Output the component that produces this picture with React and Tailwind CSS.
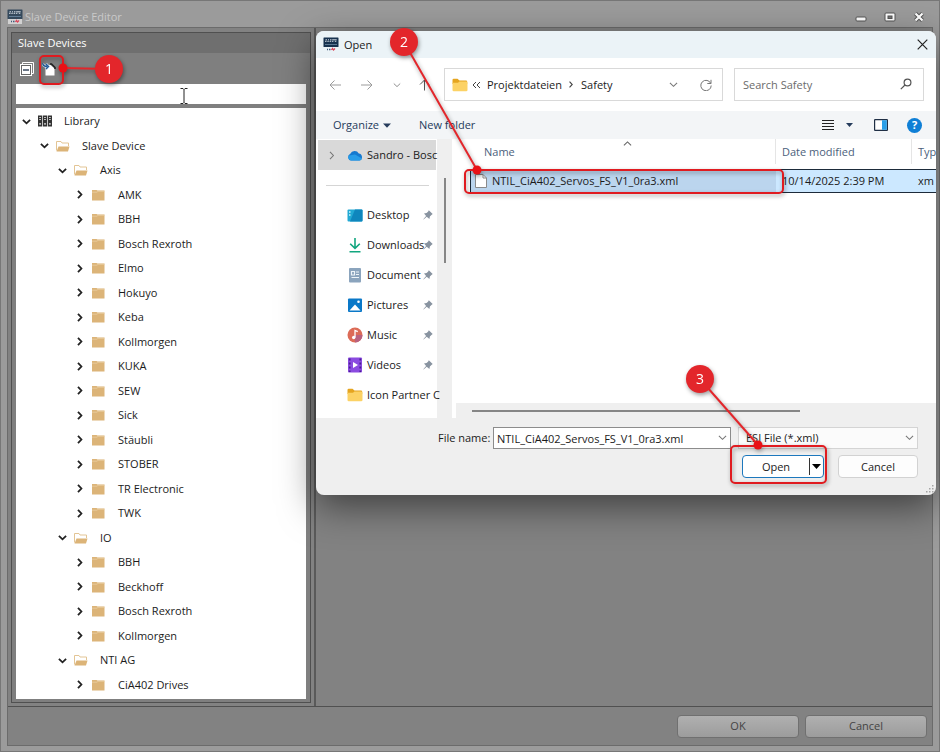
import React, { useState } from 'react';

const TREE = [
  { name: 'Library', level: 0, kind: 'library' },
  { name: 'Slave Device', level: 1, kind: 'open' },
  { name: 'Axis', level: 2, kind: 'open' },
  { name: 'AMK', level: 3, kind: 'folder' },
  { name: 'BBH', level: 3, kind: 'folder' },
  { name: 'Bosch Rexroth', level: 3, kind: 'folder' },
  { name: 'Elmo', level: 3, kind: 'folder' },
  { name: 'Hokuyo', level: 3, kind: 'folder' },
  { name: 'Keba', level: 3, kind: 'folder' },
  { name: 'Kollmorgen', level: 3, kind: 'folder' },
  { name: 'KUKA', level: 3, kind: 'folder' },
  { name: 'SEW', level: 3, kind: 'folder' },
  { name: 'Sick', level: 3, kind: 'folder' },
  { name: 'Stäubli', level: 3, kind: 'folder' },
  { name: 'STOBER', level: 3, kind: 'folder' },
  { name: 'TR Electronic', level: 3, kind: 'folder' },
  { name: 'TWK', level: 3, kind: 'folder' },
  { name: 'IO', level: 2, kind: 'open' },
  { name: 'BBH', level: 3, kind: 'folder' },
  { name: 'Beckhoff', level: 3, kind: 'folder' },
  { name: 'Bosch Rexroth', level: 3, kind: 'folder' },
  { name: 'Kollmorgen', level: 3, kind: 'folder' },
  { name: 'NTI AG', level: 2, kind: 'open' },
  { name: 'CiA402 Drives', level: 3, kind: 'folder' },
];

const INDENT = ['pl-1.5', 'pl-6', 'pl-[42px]', 'pl-[60px]'];

const PLACES = [
  { name: 'Desktop', icon: 'desktop', pinned: true },
  { name: 'Downloads', icon: 'downloads', pinned: true },
  { name: 'Document', icon: 'documents', pinned: true },
  { name: 'Pictures', icon: 'pictures', pinned: true },
  { name: 'Music', icon: 'music', pinned: true },
  { name: 'Videos', icon: 'videos', pinned: true },
  { name: 'Icon Partner C', icon: 'folder', pinned: false },
];

const AppLogo = ({ dim }) => (
  <svg width="16" height="16" viewBox="0 0 16 16" className="shrink-0" aria-hidden="true">
    {dim && <rect x="1" y="8" width="14" height="7" fill="#d2d2d2" />}
    <rect x="0.5" y="0.5" width="15" height="9.5" rx="0.5" fill={dim ? '#34495c' : '#17324f'} />
    <path d="M2 4.300h1.500M4.300 4.300h1.500M6.600 4.300h1.500M8.900 4.300h1.500M11.800 4.300h1.500M2.500 2.800h1.500M5 2.800h1M7 2.800h1.500M9.200 2.800h4.500" stroke="#e6edf3" strokeWidth="0.900" />
    <path d="M2 7.500h12" stroke="#6f8ba5" strokeWidth="0.800" />
    <path d="M4 12.500h1M6 12.500h1.500" stroke="#3f5a7a" strokeWidth="1.600" />
    <path d="M8.500 13l1-1.500 1 1.500 1.500-1.500" stroke="#d8455a" strokeWidth="1.300" fill="none" />
  </svg>
);

const Chevron = ({ dir = 'down', size = 10, color = '#222', weight = 1.2 }) => {
  const d = {
    down: 'M1 3.200 L5 7 L9 3.200',
    up: 'M1 7 L5 3.200 L9 7',
    right: 'M2.200 1 L6 5 L2.200 9',
  }[dir];
  return (
    <svg width={size} height={size} viewBox="0 0 10 10" fill="none" stroke={color} strokeWidth={weight} className="shrink-0" aria-hidden="true">
      <path d={d} />
    </svg>
  );
};

const TreeIcon = ({ kind }) => {
  if (kind === 'library') {
    return (
      <svg width="14" height="14" viewBox="0 0 14 14" className="shrink-0" aria-hidden="true">
        <rect x="0" y="1.500" width="4.200" height="11" fill="#333" />
        <rect x="4.900" y="1.500" width="4.200" height="11" fill="#333" />
        <rect x="9.800" y="1.500" width="4.200" height="11" fill="#333" />
        <path d="M1.200 3.500h1.800M1.200 5.500h1.800M6.100 3.500h1.800M6.100 5.500h1.800M11 3.500h1.800M11 5.500h1.800" stroke="#ddd" strokeWidth="0.900" />
        <path d="M1.300 9h1.600v1.700H1.300zM6.200 9h1.600v1.700H6.200zM11.100 9h1.600v1.700h-1.600z" fill="#ccc" />
      </svg>
    );
  }
  if (kind === 'open') {
    return (
      <svg width="14" height="12" viewBox="0 0 14 12" className="shrink-0" aria-hidden="true">
        <path d="M0.500 10.500V1.500H5L6 3H12.500V6" fill="none" stroke="#e3c595" />
        <path d="M2.500 6.500H13.500L12 11.500H0.500z" fill="#dcb478" />
      </svg>
    );
  }
  return (
    <svg width="14" height="12" viewBox="0 0 14 12" className="shrink-0" aria-hidden="true">
      <path d="M0 1h4.500l1 0.500H12.500V11.500H0z" fill="#dcb478" />
      <path d="M0 3.200h5l1-0.900h6.500" stroke="#ecd3a8" strokeWidth="0.700" fill="none" />
    </svg>
  );
};

const YellowFolder = () => (
  <svg width="16" height="14" viewBox="0 0 16 14" className="shrink-0" aria-hidden="true">
    <path d="M0.500 2Q0.500 0.800 1.700 0.800H5.500L7.500 2.600H14Q15.200 2.600 15.200 3.800V6H0.500z" fill="#e5a520" />
    <path d="M0.500 4.800H6L7.500 3.500H14Q15.500 3.500 15.500 4.800V12Q15.500 13.200 14.200 13.200H1.700Q0.500 13.200 0.500 12z" fill="#fcd265" />
  </svg>
);

const PlaceIcon = ({ icon }) => {
  if (icon === 'folder') return <YellowFolder />;
  return (
    <svg width="16" height="16" viewBox="0 0 16 16" className="shrink-0" aria-hidden="true">
      {icon === 'desktop' && (
        <>
          <rect x="0.500" y="2.500" width="15" height="12" rx="1" fill="#22a9d4" />
          <path d="M8 2.500h6.500q1 0 1 1v10q0 1-1 1H3z" fill="#0f86bd" />
          <path d="M2 5h1.500M2 8h1.500" stroke="#c9f2fb" strokeWidth="1.500" />
        </>
      )}
      {icon === 'downloads' && (
        <path d="M8 1V11M3.200 6.700L8 11.400L12.800 6.700M2.500 14.700H13.500" stroke="#12a67f" strokeWidth="1.600" fill="none" />
      )}
      {icon === 'documents' && (
        <>
          <rect x="2" y="1" width="12" height="14.500" rx="1" fill="#8ba4bd" />
          <path d="M4.500 4.500h3v3.500h-3zM9 5h3M9 7.500h3M4.500 10.500h7.500" stroke="#eef4f9" strokeWidth="1.200" fill="none" />
        </>
      )}
      {icon === 'pictures' && (
        <>
          <rect x="1" y="1.500" width="14" height="13.500" rx="1" fill="#0a78c8" />
          <path d="M2.500 13.500L8 7.500L13.500 13.500z" fill="#fff" />
          <circle cx="11.500" cy="4.800" r="1.300" fill="#fff" />
        </>
      )}
      {icon === 'music' && (
        <>
          <circle cx="8" cy="8" r="7.500" fill="#dc6b57" />
          <path d="M8 15.500A7.500 7.500 0 0 0 15.500 8L8 8z" fill="#b9627f" />
          <circle cx="6.700" cy="10.500" r="1.700" fill="#fff" />
          <path d="M8 10.500V3.500l2.800 1.200" stroke="#fff" strokeWidth="1.300" fill="none" />
        </>
      )}
      {icon === 'videos' && (
        <>
          <rect x="1" y="0.500" width="14" height="15" rx="1" fill="#8b4be0" />
          <path d="M2.700 1.500V15M13.300 1.500V15" stroke="#4b1d94" strokeWidth="1.700" strokeDasharray="2 2" />
          <path d="M6 5L11 8L6 11z" fill="#fff" />
        </>
      )}
    </svg>
  );
};

const Pin = () => (
  <svg width="10" height="10" viewBox="0 0 10 10" className="shrink-0" aria-hidden="true">
    <path d="M5.800 0.300L9.700 4L8.700 4.700L6.900 6.600L6.400 9L3.700 6.700L0.600 9.500L0.300 9.200L3.100 6.100L1 3.600L3.600 3.100L5.200 1.400z" fill="#8893a0" />
  </svg>
);

// Numbered badge, leader line and frame around the control it points at
const Callout = ({ n, badge, dot, frame, className }) => (
  <svg width="1" height="1" className={`pointer-events-none absolute z-20 overflow-visible drop-shadow-[1px_2px_2px_rgba(0,0,0,0.4)] ${className}`}>
    <rect x={frame[0]} y={frame[1]} width={frame[2]} height={frame[3]} rx="4" fill="none" stroke="#e01b20" strokeWidth="2" />
    <line x1={badge[0]} y1={badge[1]} x2={dot[0]} y2={dot[1]} stroke="#e3262b" strokeWidth="2" />
    <circle cx={dot[0]} cy={dot[1]} r="4.500" fill="#e81116" />
    <circle cx={badge[0]} cy={badge[1]} r="14" fill="#e3262b" />
    <text x={badge[0]} y={badge[1] + 5} textAnchor="middle" fontSize="14" fill="#fff">{n}</text>
  </svg>
);

const DeviceTree = () => {
  const [selected, setSelected] = useState(null);

  return (
    <ul className="flex flex-1 flex-col bg-white pt-px pb-0.5">
      {TREE.map((item, i) => (
        <li key={i} className="flex max-h-[25px] flex-1">
          <button
            type="button"
            onClick={() => setSelected(i)}
            className={`flex w-full items-center text-left ${INDENT[item.level]} ${selected === i ? 'bg-[#cce8ff]' : ''}`}
          >
            <Chevron dir={item.kind === 'folder' ? 'right' : 'down'} size={9} weight={2} />
            <span className="ml-[7px] flex"><TreeIcon kind={item.kind} /></span>
            <span className="ml-3">{item.name}</span>
          </button>
        </li>
      ))}
    </ul>
  );
};

const SlaveDevices = () => {
  const [filter, setFilter] = useState('');

  return (
    <section className="relative mt-1 mb-[3px] ml-[3px] flex w-[300px] shrink-0 flex-col border border-[#505050] bg-[#7f7f7f] text-[#1c1c1c]">
      <h2 className="h-5 bg-[#6f6f6f] px-1.5 leading-5 text-white">Slave Devices</h2>
      <div className="flex h-[31px] items-center gap-2 px-2">
        <button type="button" aria-label="Collapse all">
          <svg width="14" height="14" viewBox="0 0 14 14" fill="none" stroke="#fff">
            <path d="M2.500 2.500V0.500H13.500V11.500H11.500" strokeWidth="1" />
            <rect x="0.500" y="2.500" width="11" height="11" fill="#fff" stroke="#fff" />
            <rect x="1.500" y="3.500" width="9" height="9" stroke="#666" />
            <path d="M3 8h6" stroke="#3a4a60" strokeWidth="1.500" />
          </svg>
        </button>
        <button type="button" aria-label="Import device file">
          <svg width="14" height="14" viewBox="0 0 14 14">
            <path d="M3.500 3H8.500L12.500 6.500V13.500H3.500z" fill="#fff" />
            <path d="M8 2H9.500L13 5.500V7" fill="none" stroke="#222" strokeWidth="1.600" />
            <path d="M0.800 1Q0.500 4.500 5.500 4.500M4 2L6.500 4.500L4 7" fill="none" stroke="#d7e6f5" strokeWidth="2.600" />
            <path d="M0.800 1Q0.500 4.500 5.500 4.500M4 2L6.500 4.500L4 7" fill="none" stroke="#235b98" strokeWidth="1.300" />
          </svg>
        </button>
      </div>
      <div className="flex flex-1 flex-col gap-1 px-1 pb-[3px]">
        <div className="relative">
          <input
            type="text"
            aria-label="Filter devices"
            value={filter}
            onChange={(e) => setFilter(e.target.value)}
            className="block h-5 w-full bg-white px-1 outline-none"
          />
          {/* Text cursor */}
          <svg width="8" height="16" viewBox="0 0 8 16" className="pointer-events-none absolute top-1 left-[164px]" stroke="#222" fill="none">
            <path d="M0.500 0.500H3L4 1.500L5 0.500H7.500M4 1.500V14.500M0.500 15.500H3L4 14.500L5 15.500H7.500" />
          </svg>
        </div>
        <DeviceTree />
      </div>
      <Callout n={1} badge={[97, 36]} dot={[51, 35]} frame={[28, 23, 23, 28]} className="top-0 left-0" />
    </section>
  );
};

const AddressRow = () => (
  <div className="flex items-center bg-white py-2.5 pr-3 pl-3">
    <div className="flex w-[116px] shrink-0 items-center justify-between pr-3.5">
      <button type="button" aria-label="Back">
        <svg width="14" height="14" viewBox="0 0 14 14" fill="none" stroke="#9b9b9b"><path d="M13 7H2M6.500 2.500L2 7L6.500 11.500" /></svg>
      </button>
      <button type="button" aria-label="Forward">
        <svg width="14" height="14" viewBox="0 0 14 14" fill="none" stroke="#9b9b9b"><path d="M1 7H12M7.500 2.500L12 7L7.500 11.500" /></svg>
      </button>
      <button type="button" aria-label="Recent locations"><Chevron size={8} color="#8b8b8b" /></button>
      <button type="button" aria-label="Up">
        <svg width="11" height="12" viewBox="0 0 11 12" fill="none" stroke="#555"><path d="M5.500 11.500V1M1 5.500L5.500 1L10 5.500" /></svg>
      </button>
    </div>
    <nav aria-label="Address" className="flex h-[33px] flex-1 items-center border border-[#d9d9d9] pr-2.5 pl-[7px]">
      <YellowFolder />
      <span className="ml-1 text-[#444]">
        <svg width="9" height="8" viewBox="0 0 9 8" fill="none" stroke="#444"><path d="M4 1L1 4L4 7M8 1L5 4L8 7" /></svg>
      </span>
      <a href="#projektdateien" className="ml-1.5">Projektdateien</a>
      <span className="mx-1.5"><Chevron dir="right" size={7} color="#444" weight={1.6} /></span>
      <a href="#safety">Safety</a>
      <button type="button" aria-label="Previous locations" className="ml-auto"><Chevron size={9} color="#777" /></button>
      <button type="button" aria-label="Refresh" className="ml-[22px]">
        <svg width="12" height="12" viewBox="0 0 12 12" fill="none" stroke="#777"><path d="M10.800 4.500A5.200 5.200 0 1 0 11.200 6.500M11 0.800V4.500H7.300" /></svg>
      </button>
    </nav>
    <div className="relative ml-[11px]">
      <input
        type="search"
        aria-label="Search Safety"
        placeholder="Search Safety"
        className="block h-[33px] w-[190px] border border-[#d9d9d9] px-2 outline-none placeholder:text-[#6b6b6b]"
      />
      <svg width="12" height="12" viewBox="0 0 12 12" className="pointer-events-none absolute top-2.5 right-3" fill="none" stroke="#555" strokeWidth="1.200">
        <circle cx="7.500" cy="4.500" r="3.400" />
        <path d="M5 7L0.800 11.200" />
      </svg>
    </div>
  </div>
);

const CommandBar = () => (
  <div className="flex h-7 items-center bg-[#f3f5f7] pr-3.5 pl-[17px] text-[#263c5c]">
    <button type="button" className="flex items-center gap-1">
      Organize
      <svg width="8" height="5" viewBox="0 0 8 5"><path d="M0 0.500H8L4 4.800z" fill="#263c5c" /></svg>
    </button>
    <button type="button" className="ml-7">New folder</button>
    <button type="button" aria-label="Change view" className="ml-auto flex items-center gap-3">
      <svg width="12" height="10" viewBox="0 0 12 10" stroke="#222"><path d="M0 0.500H12M0 3.500H12M0 6.500H12M0 9.500H12" /></svg>
      <svg width="7" height="4" viewBox="0 0 7 4"><path d="M0 0H7L3.500 4z" fill="#263c5c" /></svg>
    </button>
    <button type="button" aria-label="Preview pane" className="ml-[21px]">
      <svg width="14" height="12" viewBox="0 0 14 12">
        <rect x="0.600" y="0.600" width="12.800" height="10.800" rx="0.500" fill="#fff" stroke="#1f2f45" strokeWidth="1.200" />
        <rect x="8" y="1.200" width="4.800" height="9.600" fill="#2a9fe8" />
      </svg>
    </button>
    <button type="button" aria-label="Help" className="ml-[19px] flex h-[15px] w-[15px] items-center justify-center rounded-full bg-[#0f7fd6] font-bold text-white">
      ?
    </button>
  </div>
);

const Places = () => (
  <aside className="flex w-[121px] shrink-0 flex-col bg-white pt-px pb-2 pl-0.5">
    <a href="#onedrive" className="mr-px flex h-[30px] items-center bg-[#d9d9d9] pl-2.5 whitespace-nowrap">
      <Chevron dir="right" size={9} color="#777" />
      <svg width="16" height="11" viewBox="0 0 16 11" className="ml-2.5 shrink-0" aria-hidden="true">
        <path d="M4 10.500A3.500 3.500 0 0 1 3.300 3.800A4.800 4.800 0 0 1 11.800 3.500A3.600 3.600 0 0 1 12.500 10.500z" fill="#1479d0" />
        <path d="M4 10.500A3 3 0 0 1 2 5.500L8 4.500L15 8.500Q14.500 10.500 12.500 10.500z" fill="#279ce8" />
      </svg>
      <span className="ml-1">Sandro - Bosc</span>
    </a>
    <hr className="mx-2 mt-[15px] mb-[14px] border-[#d5d5d5]" />
    <ul>
      {PLACES.map((place) => (
        <li key={place.name}>
          <a href={`#${place.icon}`} className="flex h-[30px] items-center pr-1 pl-[29px] whitespace-nowrap">
            <PlaceIcon icon={place.icon} />
            <span className="ml-1 min-w-0 flex-1">{place.name}</span>
            {place.pinned && <Pin />}
          </a>
        </li>
      ))}
    </ul>
  </aside>
);

const FileList = () => (
  <div className="flex min-w-0 flex-1 flex-col border-l-4 border-white bg-[#efefef]">
    <div className="flex-1 overflow-hidden bg-white pl-3.5">
      <table className="w-full table-fixed border-separate border-spacing-0 text-left whitespace-nowrap">
        <thead>
          <tr className="text-[#4c5f7c]">
            <th className="relative h-[25px] border-r border-[#e5e5e5] pl-3.5 font-normal">
              Name
              <span className="absolute top-0 left-1/2"><Chevron dir="up" size={9} color="#666" /></span>
            </th>
            <th className="h-[25px] w-[136px] border-r border-[#e5e5e5] pl-1.5 font-normal">Date modified</th>
            <th className="h-[25px] w-[24px] pl-1.5 font-normal">Typ</th>
          </tr>
        </thead>
        <tbody>
          <tr><td className="h-[5px]" colSpan={3} /></tr>
          <tr className="bg-[#cce8ff]">
            <td className="h-6 border-y border-l border-[#1d2b3a] bg-[#bbd5ee] pl-1">
              <span className="flex items-center gap-[5px]">
                <svg width="12" height="14" viewBox="0 0 12 14" className="shrink-0" aria-hidden="true">
                  <path d="M0.500 0.500H8L11.500 4V13.500H0.500z" fill="#fff" stroke="#8a8a8a" />
                  <path d="M8 0.500V4H11.500" fill="none" stroke="#8a8a8a" />
                </svg>
                NTIL_CiA402_Servos_FS_V1_0ra3.xml
              </span>
            </td>
            <td className="h-6 border-y border-[#1d2b3a] pl-1.5">10/14/2025 2:39 PM</td>
            <td className="h-6 border-y border-[#1d2b3a] pl-1.5">xm</td>
          </tr>
        </tbody>
      </table>
    </div>
    <div className="flex h-[15px] items-center pl-4">
      <div className="h-0.5 w-[328px] bg-[#868686]" />
    </div>
  </div>
);

const OpenDialog = () => {
  const [fileName, setFileName] = useState('NTIL_CiA402_Servos_FS_V1_0ra3.xml');

  return (
    <div
      role="dialog"
      aria-label="Open"
      className="absolute top-[30px] right-[3px] left-[315px] z-10 rounded-lg text-[#1b1b1b] shadow-[0_12px_36px_rgba(0,0,0,0.5)]"
    >
      <div className="overflow-hidden rounded-lg bg-[#efefef]">
        <header className="flex h-[27px] items-center bg-[#ebf3f7] pr-2 pl-[7px]">
          <AppLogo />
          <h1 className="ml-[5px]">Open</h1>
          <button type="button" aria-label="Close" className="ml-auto">
            <svg width="11" height="11" viewBox="0 0 11 11" stroke="#222" strokeWidth="1.200"><path d="M0.700 0.700L10.300 10.300M10.300 0.700L0.700 10.300" /></svg>
          </button>
        </header>
        <AddressRow />
        <CommandBar />
        <div className="flex">
          <Places />
          <div className="w-[15px] shrink-0 pt-[39px]">
            <div className="mx-auto h-[85px] w-0.5 bg-[#868686]" />
          </div>
          <FileList />
        </div>
        <footer className="pt-[9px] pr-[18px] pb-[17px] pl-[122px]">
          <div className="flex items-center">
            <label htmlFor="file-name" className="w-[55px] shrink-0">File name:</label>
            <div className="relative flex-1">
              <input
                id="file-name"
                type="text"
                value={fileName}
                onChange={(e) => setFileName(e.target.value)}
                className="block h-[22px] w-full border border-[#8c8c8c] bg-white px-[3px] outline-none"
              />
              <span className="pointer-events-none absolute top-1.5 right-1"><Chevron size={9} color="#777" /></span>
            </div>
            <div className="relative ml-[7px]">
              <select aria-label="File type" className="block h-[22px] w-[180px] appearance-none border border-[#d4d4d4] bg-[#fbfbfb] px-[7px] outline-none">
                <option>ESI File (*.xml)</option>
              </select>
              <span className="pointer-events-none absolute top-1.5 right-1"><Chevron size={9} color="#777" /></span>
            </div>
          </div>
          <div className="mt-1.5 flex justify-end gap-3.5">
            <div className="flex h-[23px] w-[82px] items-center overflow-hidden rounded border border-[#1d78bd] bg-white">
              <button type="button" className="flex-1">Open</button>
              <button type="button" aria-label="More open options" className="flex h-[17px] w-3.5 items-center justify-center border-l border-[#333]">
                <svg width="9" height="5" viewBox="0 0 9 5"><path d="M0 0H9L4.500 5z" fill="#000" /></svg>
              </button>
            </div>
            <button type="button" className="h-[23px] w-20 rounded border border-[#d2d2d2] bg-[#fdfdfd]">Cancel</button>
          </div>
        </footer>
      </div>
      <svg width="8" height="8" viewBox="0 0 8 8" className="absolute right-0.5 bottom-0.5" fill="#a5a5a5">
        <path d="M6 0h1.500v1.500H6zM3 3h1.500v1.500H3zM6 3h1.500v1.500H6zM0 6h1.500v1.500H0zM3 6h1.500v1.500H3zM6 6h1.500v1.500H6z" />
      </svg>
      <Callout n={2} badge={[88, 11]} dot={[161, 139]} frame={[149, 139, 318, 23]} className="top-0 left-0" />
      <Callout n={3} badge={[-235, -115]} dot={[-177, -49]} frame={[-204, -48, 95, 37]} className="right-0 bottom-0" />
    </div>
  );
};

const App = () => (
  <div className="relative flex min-h-screen flex-col border border-[#777] bg-[#9b9b9b] px-1.5 pb-[5px] font-['Open_Sans',sans-serif] text-[11px] leading-4">
    <header className="flex h-[26px] items-center pt-1.5 text-[#c9c9c9]">
      <AppLogo dim />
      <span className="ml-0.5">Slave Device Editor</span>
      <div className="ml-auto flex items-center gap-[17px] pr-2">
        <button type="button" aria-label="Minimize">
          <svg width="12" height="10" viewBox="0 0 12 10"><rect x="1" y="5" width="10" height="4" rx="1" fill="#fff" stroke="#555" /></svg>
        </button>
        <button type="button" aria-label="Maximize">
          <svg width="12" height="10" viewBox="0 0 12 10"><rect x="1" y="1" width="10" height="8" rx="1" fill="#fff" stroke="#555" /><rect x="4" y="4" width="4" height="2.500" fill="#777" stroke="#555" /></svg>
        </button>
        <button type="button" aria-label="Close window">
          <svg width="12" height="10" viewBox="0 0 12 10" fill="none"><path d="M2.500 1.500L9.500 8.500M9.500 1.500L2.500 8.500" stroke="#555" strokeWidth="4" /><path d="M2.500 1.500L9.500 8.500M9.500 1.500L2.500 8.500" stroke="#fff" strokeWidth="2.200" /></svg>
        </button>
      </div>
    </header>
    <main className="flex flex-1 flex-col border border-[#6b6b6b] bg-[#828282]">
      <div className="flex flex-1">
        <SlaveDevices />
        <div className="ml-[3px] flex-1 border-l-2 border-[#5a5a5a]" />
      </div>
      <footer className="flex h-[39px] items-center justify-end gap-1.5 border-t border-[#505050] pr-[5px] text-[#444]">
        <button type="button" className="h-[23px] w-[122px] rounded-sm border border-[#707070] bg-linear-to-b from-[#b0b0b0] to-[#9c9c9c]">OK</button>
        <button type="button" className="h-[23px] w-[122px] rounded-sm border border-[#707070] bg-linear-to-b from-[#b0b0b0] to-[#9c9c9c]">Cancel</button>
      </footer>
    </main>
    <OpenDialog />
  </div>
);

export default App;
